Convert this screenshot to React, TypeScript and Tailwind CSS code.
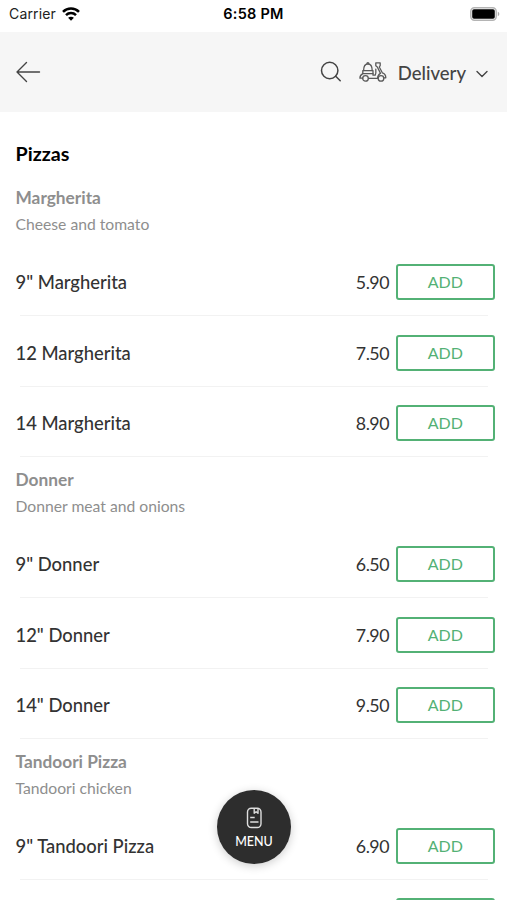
const sections = [
  {
    title: 'Margherita',
    description: 'Cheese and tomato',
    items: [
      { name: '9" Margherita', price: '5.90' },
      { name: '12 Margherita', price: '7.50' },
      { name: '14 Margherita', price: '8.90' },
    ],
  },
  {
    title: 'Donner',
    description: 'Donner meat and onions',
    items: [
      { name: '9" Donner', price: '6.50' },
      { name: '12" Donner', price: '7.90' },
      { name: '14" Donner', price: '9.50' },
    ],
  },
  {
    title: 'Tandoori Pizza',
    description: 'Tandoori chicken',
    items: [{ name: '9" Tandoori Pizza', price: '6.90' }],
  },
];

function WifiIcon() {
  return (
    <svg width="18" height="14" viewBox="0 0 18 14" fill="none" stroke="#000" strokeWidth="2.5">
      <path d="M1 4.900C5.400.400 12.600.400 17 4.900" />
      <path d="M4 8.100c2.800-2.800 7.200-2.800 10 0" />
      <path d="M9 13.700 6.100 10.800c1.600-1.500 4.200-1.500 5.800 0z" fill="#000" stroke="none" />
    </svg>
  );
}

function BatteryIcon() {
  return (
    <svg width="30" height="14" viewBox="0 0 30 14">
      <rect x="0.800" y="0.800" width="25.400" height="12.400" rx="3.600" fill="#fff" stroke="#b4b4b4" strokeWidth="1.500" />
      <rect x="2.200" y="2.200" width="22.600" height="9.600" rx="1.800" fill="#000" />
      <path d="M27.800 4.800c2 .7 2 3.700 0 4.400z" fill="#aaa" />
    </svg>
  );
}

function ScooterIcon() {
  return (
    <svg width="28" height="20" viewBox="0 0 28 20" fill="none" stroke="#5a5a5a" strokeWidth="1.300" strokeLinejoin="round" strokeLinecap="round">
      <path d="M4.600 8.600C4.600 4.600 6 2 8.900 2s4.300 2.600 4.300 6.600" />
      <path d="M7.900 1.800c0-1.400 2-1.400 2 0" />
      <path d="M3.800 8.600H14v3H3.800z" />
      <path d="M3.800 11.600C2 12.500.9 13.800.9 16.200h2.800" />
      <circle cx="6.500" cy="16.400" r="2.800" />
      <path d="M9.500 16.400h9c.3-2.500 1.200-4.200 3-5L18.300 5l-1.500-1.200V.9h4.400v2.700l-.9 1.400 3 5.800c2.300.7 3.500 2.500 3.500 5h-1.700" />
      <path d="M14 11.600v1.600h2.200c.8-1.500.8-3.800.6-6" />
      <circle cx="22" cy="16.400" r="2.800" />
    </svg>
  );
}

function MenuIcon() {
  return (
    <svg width="17" height="22" viewBox="0 0 17 22" fill="none" stroke="#dedede" strokeWidth="1.400" strokeLinejoin="round">
      <rect x="1.500" y="1.200" width="13.500" height="19.300" rx="3.800" />
      <path d="M8.200 1.200v5l1.900-1.500L12 6.200v-5M4.200 10.500h4.500M4.200 15h8.300" />
    </svg>
  );
}

function AddButton({ label }: { label?: string }) {
  return (
    <button className="ml-[6.5px] h-9 w-[99.5px] shrink-0 rounded-[3px] border-2 border-[#53b175] text-[16px] text-[#53b175]">
      {label}
    </button>
  );
}

export default function App() {
  return (
    <div className="relative h-[900px] w-[507px] overflow-hidden whitespace-nowrap bg-white font-['Lato',sans-serif] text-[#333]">
      <div className="grid h-8 grid-cols-3 items-center pb-[5px] pl-[9px] pr-[7px] font-['Inter',sans-serif]">
        <div className="flex items-center gap-[6px] text-[14px] tracking-[0.15px] text-[#222]">
          Carrier <WifiIcon />
        </div>
        <div className="-ml-[2px] text-center text-[14.5px] font-semibold tracking-[0.25px] text-black">6:58 PM</div>
        <div className="flex justify-end"><BatteryIcon /></div>
      </div>

      <header className="flex h-20 items-center bg-[#f6f6f6] pl-4 pr-[18px]">
        <svg width="26" height="22" viewBox="0 0 26 22" fill="none" stroke="#444" strokeWidth="1.400" strokeLinecap="round" strokeLinejoin="round">
          <path d="M23.500 11H1M10.500 1.500 1 11l9.500 9.500" />
        </svg>
        <div className="ml-auto flex items-center">
          <svg width="22" height="22" viewBox="0 0 22 22" fill="none" stroke="#444" strokeWidth="1.500" strokeLinecap="round">
            <circle cx="9.700" cy="9.500" r="8.200" />
            <path d="m15.700 15.300 4.500 4.500" />
          </svg>
          <span className="ml-[17px]"><ScooterIcon /></span>
          <span className="ml-[11px] pt-px text-[18.5px] font-medium leading-6 text-[#444]">Delivery</span>
          <svg className="ml-[9px] mt-[3px]" width="14" height="10" viewBox="0 0 14 10" fill="none" stroke="#444" strokeWidth="1.400" strokeLinecap="round" strokeLinejoin="round">
            <path d="m2 2.500 5 5 5-5" />
          </svg>
        </div>
      </header>

      <main>
        <h1 className="h-[63px] pl-[15.5px] pt-[30px] text-[19.7px] font-bold leading-6 text-black">Pizzas</h1>
        {sections.map((section) => (
          <section key={section.title}>
            <div className="h-[70.5px] pl-[15.5px] pt-[10.4px]">
              <h2 className="text-[17.3px] font-bold leading-[26px] text-[#8e8e8e]">{section.title}</h2>
              <p className="text-[15.7px] leading-[26px] text-[#8e8e8e]">{section.description}</p>
            </div>
            {section.items.map((item) => (
              <div key={item.name} className="flex h-[70.5px] flex-col">
                <div className="flex flex-1 items-center pl-[15.5px] pr-3 pt-[3.5px]">
                  <span className="pt-[2px] text-[18.4px] font-medium">{item.name}</span>
                  <span className="ml-auto pt-px text-[17.8px] tracking-[-0.5px]">{item.price}</span>
                  <AddButton label="ADD" />
                </div>
                <div className="ml-5 mr-[19px] h-px bg-[#f2f2f2]" />
              </div>
            ))}
          </section>
        ))}
        <div className="flex justify-end pr-3 pt-[18px]">
          <AddButton />
        </div>
      </main>

      <button className="absolute left-[217px] top-[790px] flex size-[74px] flex-col items-center rounded-full bg-[#2d2d2d] pt-[17px] text-white shadow-[0_2px_10px_rgba(0,0,0,0.2)]">
        <MenuIcon />
        <span className="mt-[4px] text-[12.5px] font-medium leading-[18px]">MENU</span>
      </button>
    </div>
  );
}
